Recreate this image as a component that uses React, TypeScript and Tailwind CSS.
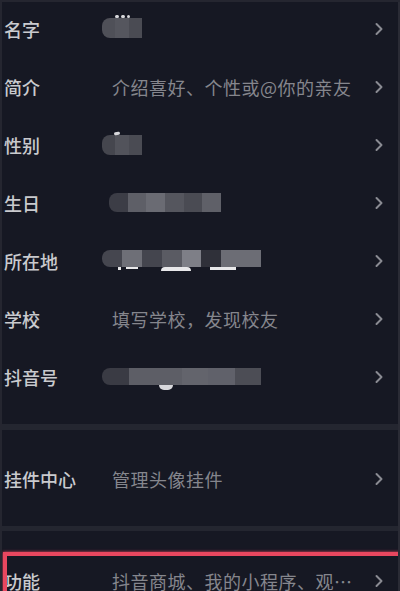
import React from 'react';

type Row = {
    label: string;
    value?: string;
    mask?: React.ReactNode;
};

const Chevron = () => (
    <svg width="10" height="14" viewBox="0 0 10 14" className="shrink-0">
        <path
            d="M2.5 2 L7.5 7 L2.5 12"
            fill="none"
            stroke="#8a8b92"
            strokeWidth="2"
            strokeLinecap="round"
            strokeLinejoin="round"
        />
    </svg>
);

// pixelated cover over private info
const Mosaic = ({ colors, w, h }: { colors: string[]; w: number; h: number }) => (
    <div className="flex overflow-hidden rounded-l-[8px]" style={{ width: w, height: h }}>
        {colors.map((c, i) => (
            <div key={i} className="h-full flex-1" style={{ background: c }} />
        ))}
    </div>
);

const rows: Row[] = [
    {
        label: '名字',
        mask: (
            <div className="relative -mt-[2px] ml-[-10px]">
                <div className="absolute -top-[3px] left-[13px] flex gap-[2px]">
                    <span className="h-[3px] w-[4px] rounded-full bg-[#d8d8dc]" />
                    <span className="h-[3px] w-[4px] rounded-full bg-[#d8d8dc]" />
                    <span className="h-[3px] w-[3px] rounded-full bg-[#d8d8dc]" />
                </div>
                <Mosaic colors={['#4f5058', '#55565e', '#4a4b53']} w={40} h={20} />
            </div>
        ),
    },
    { label: '简介', value: '介绍喜好、个性或@你的亲友' },
    {
        label: '性别',
        mask: (
            <div className="relative ml-[-10px]">
                <span className="absolute -top-[3px] left-[12px] h-[3px] w-[6px] -rotate-12 rounded-full bg-[#d8d8dc]" />
                <Mosaic colors={['#45464e', '#52535b', '#4a4b53']} w={40} h={20} />
            </div>
        ),
    },
    {
        label: '生日',
        mask: (
            <div className="-mt-[2px] ml-[-3px]">
                <Mosaic
                    colors={['#3c3d46', '#5e5f67', '#6a6b73', '#55565e', '#4a4b53', '#5f6068']}
                    w={112}
                    h={19}
                />
            </div>
        ),
    },
    {
        label: '所在地',
        mask: (
            <div className="relative -mt-[6px] ml-[-10px]">
                <Mosaic
                    colors={['#45464f', '#6e6f77', '#44454e', '#5a5b63', '#7e7f87', '#2f3039', '#6c6d75', '#6c6d75']}
                    w={159}
                    h={17}
                />
                <div className="absolute top-[17px] left-0 flex gap-[3px]">
                    <span className="ml-[16px] h-[3px] w-[3px] bg-[#e8e8ea]" />
                    <span className="ml-[2px] h-[2px] w-[12px] bg-[#e8e8ea]" />
                    <span className="ml-[20px] h-[4px] w-[30px] rounded-t-full bg-[#e8e8ea]" />
                    <span className="ml-[16px] h-[3px] w-[26px] bg-[#e8e8ea]" />
                </div>
            </div>
        ),
    },
    { label: '学校', value: '填写学校，发现校友' },
    {
        label: '抖音号',
        mask: (
            <div className="relative -mt-[2px] ml-[-10px]">
                <Mosaic
                    colors={['#3a3b44', '#5d5e66', '#5d5e66', '#63646c', '#60616a', '#4c4d55']}
                    w={159}
                    h={17}
                />
                <span className="absolute top-[17px] left-[57px] h-[5px] w-[14px] rounded-b-full bg-[#d8d8dc]" />
            </div>
        ),
    },
];

const ItemRow = ({ row }: { row: Row }) => (
    <div className="flex h-[58px] items-center">
        <span className="w-[112px] shrink-0 pl-[4px] text-[18px] font-medium text-[#c9cace]">{row.label}</span>
        <div className="flex min-w-0 flex-1 items-center">
            {row.value ? (
                <span className="whitespace-nowrap text-[18px] tracking-[0.5px] text-[#85868d]">{row.value}</span>
            ) : (
                row.mask
            )}
        </div>
        <div className="mr-[16px] ml-[12px] flex w-[10px] justify-center">
            <Chevron />
        </div>
    </div>
);

export default function App() {
    return (
        <div
            className="relative h-[591px] w-[400px] overflow-hidden border-t-[2px] border-l-[2px] border-[#252630] bg-[#161823] leading-none"
            style={{ fontFamily: '"Noto Sans CJK SC", "Noto Sans", sans-serif' }}
        >
            <div className="-mt-[2px] -ml-[2px] pb-[18px]">
                {rows.map((row) => (
                    <ItemRow key={row.label} row={row} />
                ))}
            </div>
            <div className="-ml-[2px] h-[6px] bg-[#242630]" />
            <div className="-ml-[2px] pt-[20px] pb-[18px]">
                <ItemRow row={{ label: '挂件中心', value: '管理头像挂件' }} />
            </div>
            <div className="-ml-[2px] h-[5px] bg-[#242630]" />
            <div className="relative -ml-[2px] pt-[21px]">
                <ItemRow row={{ label: '功能', value: '抖音商城、我的小程序、观…' }} />
                {/* highlight annotation */}
                <div className="absolute top-[21px] -right-[6px] -bottom-[6px] left-[3px] border-[4px] border-[#e8475f] shadow-[0_0_3px_#e8475f]" />
            </div>
            <div className="absolute top-0 right-0 h-full w-[2px] bg-[#2a2b35]" />
        </div>
    );
}
